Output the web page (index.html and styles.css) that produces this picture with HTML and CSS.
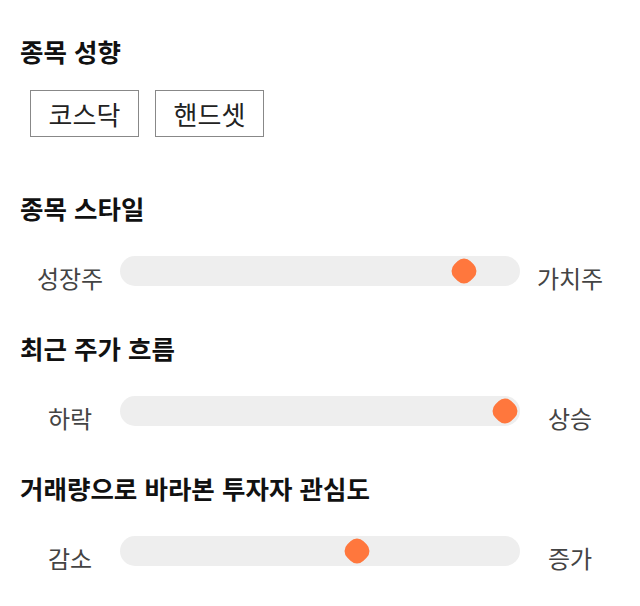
FILE: index.html
```html
<!DOCTYPE html>
<html lang="ko">
<head>
  <meta charset="UTF-8">
  <title>종목 성향</title>
  <link rel="stylesheet" href="styles.css">
</head>
<body>

  <div class="section">
    <h2>종목 성향</h2>
    <div class="tags">
      <button class="tag">코스닥</button>
      <button class="tag">핸드셋</button>
    </div>
  </div>

  <div class="section">
    <h2>종목 스타일</h2>
    <div class="slider-row">
      <span class="side">성장주</span>
      <div class="track">
        <span class="thumb" style="left: 86%"></span>
      </div>
      <span class="side">가치주</span>
    </div>
  </div>

  <div class="section">
    <h2>최근 주가 흐름</h2>
    <div class="slider-row">
      <span class="side">하락</span>
      <div class="track">
        <span class="thumb" style="left: 96.25%"></span>
      </div>
      <span class="side">상승</span>
    </div>
  </div>

  <div class="section">
    <h2>거래량으로 바라본 투자자 관심도</h2>
    <div class="slider-row">
      <span class="side">감소</span>
      <div class="track">
        <span class="thumb" style="left: 59.25%"></span>
      </div>
      <span class="side">증가</span>
    </div>
  </div>

</body>
</html>
```

FILE: styles.css
```css
html {
  background-color: #ffffff;
}

body {
  font-family: "Noto Sans CJK KR", "Noto Sans", sans-serif;
  background-color: #ffffff;
  color: #111;
  margin: 0;
  padding: 36px 20px 40px;
  min-height: 606px;
  box-sizing: border-box;
}

.section {
  margin-top: 47px;
}

.section:first-child {
  margin-top: 0;
}

.section:nth-child(2) {
  margin-top: 56px;
}

h2 {
  margin: 0;
  font-size: 25.5px;
  line-height: 30px;
  font-weight: bold;
}

.tags {
  display: flex;
  gap: 16px;
  margin-top: 24px;
  padding-left: 10px;
}

.tag {
  font-family: inherit;
  font-size: 26px;
  color: #222;
  background: #fff;
  border: 1px solid #888;
  border-radius: 0;
  width: 109px;
  height: 47px;
  padding: 0;
  line-height: 45px;
}

.slider-row {
  display: flex;
  align-items: flex-start;
  margin-top: 33px;
  height: 30px;
}

.side {
  width: 100px;
  padding-top: 4px;
  line-height: 36px;
  text-align: center;
  font-size: 24px;
  color: #444;
}

.track {
  flex: 1;
  position: relative;
  height: 30px;
  background-color: #eeeeee;
  border-radius: 15px;
}

.thumb {
  position: absolute;
  top: 50%;
  width: 23px;
  height: 23px;
  background-color: #ff773d;
  border-radius: 40%;
  transform: translate(-50%, -50%) rotate(45deg);
}
```
